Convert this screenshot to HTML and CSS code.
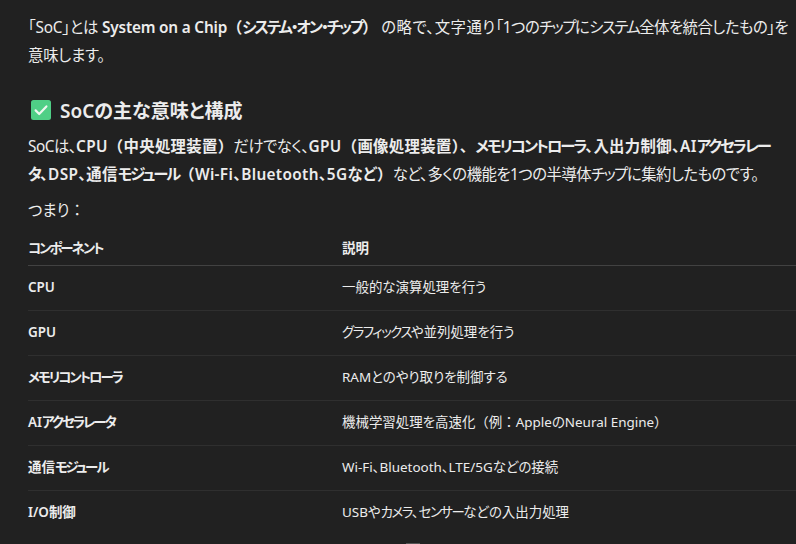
FILE: index.html
```html
<!DOCTYPE html>
<html lang="ja">
<head>
<meta charset="utf-8">
<title>SoC</title>
<link rel="stylesheet" href="styles.css">
</head>
<body>
<main class="message">
<p class="lead">「SoC」とは <strong>System on a Chip<span class="fw">（</span><span class="kt">システム・オン・チップ</span><span class="fw">）</span></strong> <span class="wide">の略で、文字通り</span><span class="tight">「1つの<span class="kt">チップ</span>に<span class="kt">システム</span>全体を統合したもの」を</span><br>意味します。</p>
<h3 class="heading"><svg class="check" viewBox="0 0 20 20" aria-hidden="true"><rect x="0" y="0" width="20" height="20" rx="2.5" fill="#4fcf86"/><path d="M4.6 10.4l3.6 3.6 7.2-7.6" fill="none" stroke="#eef7f0" stroke-width="2.2" stroke-linecap="round" stroke-linejoin="round"/></svg><span>SoCの主な意味と構成</span></h3>
<p class="body">SoCは、<strong>CPU<span class="fw">（</span>中央処理装置<span class="fw">）</span></strong>だけでなく、<strong>GPU<span class="fw">（</span>画像処理装置<span class="fw">）</span><span class="fw">、</span><span class="kt">メモリコントローラ</span>、入出力制御、AI<span class="kt">アクセラレー</span><br><span class="kt">タ</span>、DSP、通信<span class="kt">モジュール</span><span class="fw">（</span>Wi-Fi、Bluetooth、5Gなど<span class="fw">）</span></strong>など、多くの機能を1つの半導体<span class="kt">チップ</span>に集約したものです。</p>
<p class="summary">つまり<span class="fw">：</span></p>
<table class="parts">
<thead><tr><th><span class="kt">コンポーネント</span></th><th>説明</th></tr></thead>
<tbody>
<tr><td>CPU</td><td>一般的な演算処理を行う</td></tr>
<tr><td>GPU</td><td><span class="kt">グラフィックス</span>や並列処理を行う</td></tr>
<tr><td><span class="kt">メモリコントローラ</span></td><td>RAMとのやり取りを制御する</td></tr>
<tr><td>AI<span class="kt">アクセラレータ</span></td><td>機械学習処理を高速化<span class="fw">（</span>例<span class="fw">：</span>AppleのNeural Engine<span class="fw">）</span></td></tr>
<tr><td>通信<span class="kt">モジュール</span></td><td>Wi-Fi、Bluetooth、LTE/5Gなどの接続</td></tr>
<tr><td>I/O制御</td><td>USBや<span class="kt">カメラ</span>、<span class="kt">センサー</span>などの入出力処理</td></tr>
</tbody>
</table>
</main>
<div class="scroll-hint"></div>
</body>
</html>
```
FILE: styles.css
```css
html, body {
  margin: 0;
  height: 100%;
  background: #212121;
  overflow: hidden;
}
body {
  color: #ececec;
  font-family: "Noto Sans", "Noto Sans CJK JP", sans-serif;
  font-size: 15.36px;
  font-feature-settings: "palt";
  position: relative;
}
.fw {
  font-feature-settings: normal;
}
.kt {
  letter-spacing: -1.5px;
}
strong .kt,
th .kt,
td:first-child .kt {
  letter-spacing: -2px;
}
.message {
  padding: 14px 0 0 28px;
}
.lead, .body, .summary {
  margin: 0;
  line-height: 28px;
  white-space: nowrap;
}
.lead {
  letter-spacing: -0.2px;
}
.body {
  letter-spacing: -0.5px;
}
.body strong {
  letter-spacing: 0.35px;
}
.wide {
  letter-spacing: 0.5px;
}
.tight {
  letter-spacing: -0.5px;
}
strong {
  font-weight: 600;
}
.heading {
  display: flex;
  align-items: center;
  gap: 9px;
  margin: 26px 0 0 3px;
  height: 28px;
  font-size: 19px;
  font-weight: 600;
}
.check {
  width: 20px;
  height: 20px;
  flex: none;
}
.body {
  margin-top: 9px;
}
.summary {
  margin-top: 8px;
}
.parts {
  width: 100%;
  table-layout: fixed;
  border-collapse: collapse;
  font-size: 13.44px;
  margin-top: 13px;
}
.parts th, .parts td {
  text-align: left;
  padding: 0;
  line-height: 20px;
  box-sizing: border-box;
}
.parts th:first-child, .parts td:first-child {
  width: 314px;
  font-weight: 600;
}
.parts th {
  font-weight: 600;
  padding-bottom: 7px;
  border-bottom: 1px solid #424242;
}
.parts td {
  height: 45px;
  padding-bottom: 2px;
  border-bottom: 1px solid #2f2f2f;
}
.parts tr:last-child td {
  border-bottom: none;
}
.scroll-hint {
  position: absolute;
  left: 406px;
  bottom: 0;
  width: 14px;
  height: 1px;
  background: #555;
}
```
